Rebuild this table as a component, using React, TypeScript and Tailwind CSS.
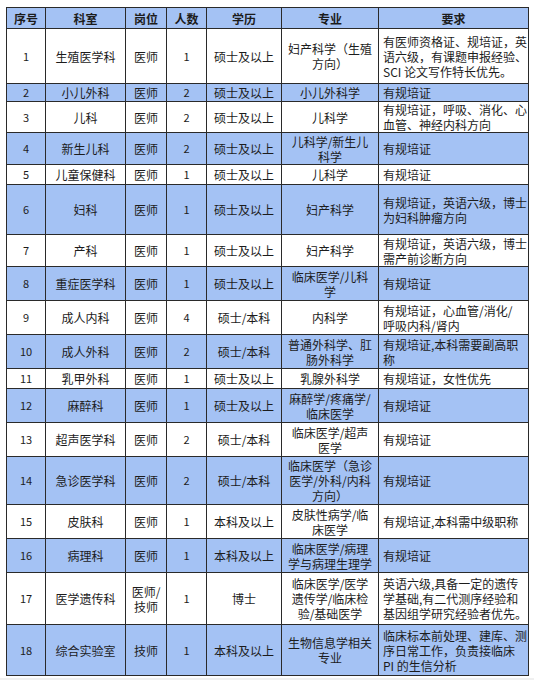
type Row = {
  no: string;
  dept: string;
  post: string[];
  count: string;
  degree: string;
  major: string[];
  req: string[];
  h: number;
};

const rows: Row[] = [
  { no: "1", dept: "生殖医学科", post: ["医师"], count: "1", degree: "硕士及以上", major: ["妇产科学（生殖", "方向）"], req: ["有医师资格证、规培证，英", "语六级，有课题申报经验、", "SCI 论文写作特长优先。"], h: 55 },
  { no: "2", dept: "小儿外科", post: ["医师"], count: "2", degree: "硕士及以上", major: ["小儿外科学"], req: ["有规培证"], h: 18 },
  { no: "3", dept: "儿科", post: ["医师"], count: "2", degree: "硕士及以上", major: ["儿科学"], req: ["有规培证，呼吸、消化、心", "血管、神经内科方向"], h: 30 },
  { no: "4", dept: "新生儿科", post: ["医师"], count: "2", degree: "硕士及以上", major: ["儿科学/新生儿", "科学"], req: ["有规培证"], h: 32 },
  { no: "5", dept: "儿童保健科", post: ["医师"], count: "1", degree: "硕士及以上", major: ["儿科学"], req: ["有规培证"], h: 20 },
  { no: "6", dept: "妇科", post: ["医师"], count: "1", degree: "硕士及以上", major: ["妇产科学"], req: ["有规培证，英语六级，博士", "为妇科肿瘤方向"], h: 50 },
  { no: "7", dept: "产科", post: ["医师"], count: "1", degree: "硕士及以上", major: ["妇产科学"], req: ["有规培证，英语六级，博士", "需产前诊断方向"], h: 32 },
  { no: "8", dept: "重症医学科", post: ["医师"], count: "1", degree: "硕士及以上", major: ["临床医学/儿科", "学"], req: ["有规培证"], h: 34 },
  { no: "9", dept: "成人内科", post: ["医师"], count: "4", degree: "硕士/本科", major: ["内科学"], req: ["有规培证，心血管/消化/", "呼吸内科/肾内"], h: 34 },
  { no: "10", dept: "成人外科", post: ["医师"], count: "2", degree: "硕士/本科", major: ["普通外科学、肛", "肠外科学"], req: ["有规培证,本科需要副高职", "称"], h: 34 },
  { no: "11", dept: "乳甲外科", post: ["医师"], count: "1", degree: "硕士及以上", major: ["乳腺外科学"], req: ["有规培证，女性优先"], h: 20 },
  { no: "12", dept: "麻醉科", post: ["医师"], count: "1", degree: "硕士及以上", major: ["麻醉学/疼痛学/", "临床医学"], req: ["有规培证"], h: 34 },
  { no: "13", dept: "超声医学科", post: ["医师"], count: "2", degree: "硕士/本科", major: ["临床医学/超声", "医学"], req: ["有规培证"], h: 34 },
  { no: "14", dept: "急诊医学科", post: ["医师"], count: "2", degree: "硕士/本科", major: ["临床医学（急诊", "医学/外科/内科", "方向）"], req: ["有规培证"], h: 48 },
  { no: "15", dept: "皮肤科", post: ["医师"], count: "1", degree: "本科及以上", major: ["皮肤性病学/临", "床医学"], req: ["有规培证,本科需中级职称"], h: 34 },
  { no: "16", dept: "病理科", post: ["医师"], count: "1", degree: "本科及以上", major: ["临床医学/病理", "学与病理生理学"], req: ["有规培证"], h: 34 },
  { no: "17", dept: "医学遗传科", post: ["医师/", "技师"], count: "1", degree: "博士", major: ["临床医学/医学", "遗传学/临床检", "验/基础医学"], req: ["英语六级,具备一定的遗传", "学基础,有二代测序经验和", "基因组学研究经验者优先。"], h: 52 },
  { no: "18", dept: "综合实验室", post: ["技师"], count: "1", degree: "本科及以上", major: ["生物信息学相关", "专业"], req: ["临床标本前处理、建库、测", "序日常工作，负责接临床", "PI 的生信分析"], h: 51 },
];

function Lines({ items }: { items: string[] }) {
  return (
    <>
      {items.map((t, i) => (
        <div key={i} className="whitespace-nowrap">
          {t}
        </div>
      ))}
    </>
  );
}

const cell = "border border-[#2a2a2a] p-0 align-middle";

export default function App() {
  return (
    <div
      className="h-[680px] w-[534px] overflow-hidden bg-white text-[12px] leading-[15px] text-[#1c1c1c]"
      style={{ fontFamily: '"Noto Sans CJK SC", "Noto Sans", sans-serif' }}
    >
      <div className="pl-[6px] pt-[7px]">
        <table className="w-[522px] table-fixed border-collapse border border-[#111]">
          <colgroup>
            <col className="w-[39px]" />
            <col className="w-[80px]" />
            <col className="w-[41px]" />
            <col className="w-[40px]" />
            <col className="w-[75px]" />
            <col className="w-[97px]" />
            <col className="w-[150px]" />
          </colgroup>
          <thead>
            <tr className="h-[21px] bg-[#a4c2f4] font-bold">
              <th className={cell}>序号</th>
              <th className={cell}>科室</th>
              <th className={cell}>岗位</th>
              <th className={cell}>人数</th>
              <th className={cell}>学历</th>
              <th className={cell}>专业</th>
              <th className={cell}>要求</th>
            </tr>
          </thead>
          <tbody>
            {rows.map((r) => (
              <tr
                key={r.no}
                className={Number(r.no) % 2 === 0 ? "bg-[#a4c2f4]" : "bg-white"}
                style={{ height: r.h }}
              >
                <td className={`${cell} text-center text-[11px]`}>{r.no}</td>
                <td className={`${cell} text-center`}>{r.dept}</td>
                <td className={`${cell} text-center`}>
                  <Lines items={r.post} />
                </td>
                <td className={`${cell} text-center text-[11px]`}>{r.count}</td>
                <td className={`${cell} text-center`}>{r.degree}</td>
                <td className={`${cell} text-center`}>
                  <Lines items={r.major} />
                </td>
                <td className={`${cell} pl-[4px] text-left`}>
                  <Lines items={r.req} />
                </td>
              </tr>
            ))}
          </tbody>
        </table>
      </div>
      <div className="mt-[2px] h-[10px] w-full bg-[#f0f0f0]" />
    </div>
  );
}
